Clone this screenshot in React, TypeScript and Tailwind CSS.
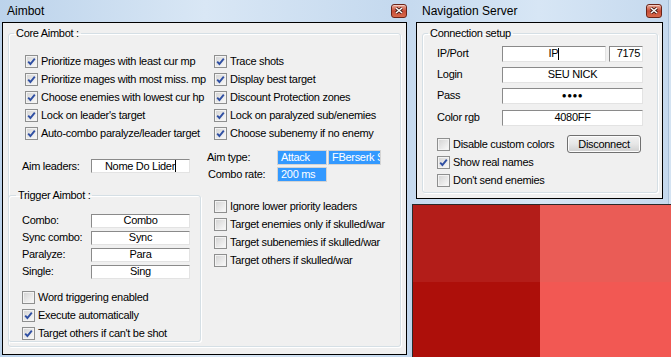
import type { ReactNode } from "react";

const ui = "font-['Liberation_Sans',Arial,sans-serif] text-[11px] tracking-[-0.3px] text-black";

function CloseBtn() {
  return (
    <span className="w-[16px] h-[14px] rounded-[3px] border border-[#6b2418] bg-linear-to-b from-[#eaa896] via-[#c64c37] to-[#d9694b] flex items-center justify-center shadow-[inset_0_1px_0_rgba(255,255,255,0.45)]">
      <svg width="8" height="7" viewBox="0 0 8 7">
        <path d="M1 1 L7 6 M7 1 L1 6" stroke="#3b1711" strokeWidth="3" />
        <path d="M1 1 L7 6 M7 1 L1 6" stroke="#ffffff" strokeWidth="1.5" />
      </svg>
    </span>
  );
}

function Check({ on, label }: { on?: boolean; label: string }) {
  return (
    <div className="flex items-center h-[18px] gap-[3px] whitespace-nowrap">
      <span className="w-[13px] h-[13px] shrink-0 border border-[#8e8f8f] bg-linear-to-br from-[#d2d2d2] to-[#fbfbfb] shadow-[inset_0_0_0_1px_#f3f3f3] flex items-center justify-center">
        {on && (
          <svg width="9" height="9" viewBox="0 0 9 9">
            <path d="M1.2 4.6 L3.4 7 L7.8 1.6" stroke="#2f4fa3" strokeWidth="1.9" fill="none" />
          </svg>
        )}
      </span>
      <span>{label}</span>
    </div>
  );
}

function Field({ children, className = "" }: { children?: ReactNode; className?: string }) {
  return (
    <div
      className={`h-[14px] bg-white border border-t-[#8a8a8a] border-l-[#8a8a8a] border-r-[#e3e3e3] border-b-[#e3e3e3] flex items-center justify-center whitespace-nowrap overflow-hidden ${className}`}
    >
      {children}
    </div>
  );
}

function Caret() {
  return <span className="inline-block w-px h-[12px] bg-black" />;
}

function Blue({ children, w }: { children: ReactNode; w: string }) {
  return (
    <div className={`${w} h-[15px] bg-[#3399ff] border border-[#d4d4d4] text-white pl-[3px] flex items-center whitespace-nowrap overflow-hidden`}>
      {children}
    </div>
  );
}

const groupBox = "border border-[#d5dfe5] rounded-[3px] shadow-[inset_1px_1px_0_#fff,1px_1px_0_#fff]";

export default function App() {
  const coreLeft = [
    "Prioritize mages with least cur mp",
    "Prioritize mages with most miss. mp",
    "Choose enemies with lowest cur hp",
    "Lock on leader's target",
    "Auto-combo paralyze/leader target",
  ];
  const coreRight = [
    "Trace shots",
    "Display best target",
    "Discount Protection zones",
    "Lock on paralyzed sub/enemies",
    "Choose subenemy if no enemy",
  ];
  const triggers = [
    ["Combo:", "Combo"],
    ["Sync combo:", "Sync"],
    ["Paralyze:", "Para"],
    ["Single:", "Sing"],
  ];
  const skull = [
    "Ignore lower priority leaders",
    "Target enemies only if skulled/war",
    "Target subenemies if skulled/war",
    "Target others if skulled/war",
  ];

  return (
    <div className={`w-[671px] h-[357px] flex overflow-hidden bg-[#c9dbee] ${ui}`}>
      {/* Aimbot window */}
      <div className="w-[410px] h-full flex flex-col bg-linear-to-r from-[#bcd3eb] via-[#d9e7f5] to-[#c3d8ee] pl-[2px] pr-[3px]">
        <div className="h-[22px] flex items-center justify-between pl-[5px] pb-[1px]">
          <span className="font-['Liberation_Sans',Arial,sans-serif] text-[12px] tracking-normal">Aimbot</span>
          <CloseBtn />
        </div>
        <div className="h-[333px] border border-black bg-[#f0f0f0] pl-[5px] pt-[3px]">
          <fieldset className={`w-[393px] pb-[4px] ${groupBox}`}>
            <legend className="ml-[5px] px-[2px] leading-[14px]">Core Aimbot :</legend>
            <div className="flex pl-[16px] pt-[12px]">
              <div className="w-[189px]">
                {coreLeft.map((t) => (
                  <Check key={t} on label={t} />
                ))}
              </div>
              <div>
                {coreRight.map((t) => (
                  <Check key={t} on label={t} />
                ))}
              </div>
            </div>

            <div className="flex mt-[7px]">
              <div className="w-[198px] flex items-center pl-[13px]">
                <span className="w-[69px]">Aim leaders:</span>
                <Field className="w-[99px]">
                  Nome Do Lider
                  <Caret />
                </Field>
              </div>
              <div className="flex flex-col">
                <div className="h-[17px] flex items-center">
                  <span className="w-[70px]">Aim type:</span>
                  <Blue w="w-[50px]">Attack</Blue>
                  <div className="w-px" />
                  <Blue w="w-[53px]">FBerserk S</Blue>
                </div>
                <div className="h-[17px] flex items-center">
                  <span className="w-[70px] pl-px">Combo rate:</span>
                  <Blue w="w-[50px]">200 ms</Blue>
                </div>
              </div>
            </div>

            <div className="flex mt-[5px]">
              <fieldset className={`-ml-px w-[193px] ${groupBox}`}>
                <legend className="ml-[7px] px-[2px] leading-[14px]">Trigger Aimbot :</legend>
                <div className="pt-[10px] pl-[13px]">
                  {triggers.map(([l, v]) => (
                    <div key={l} className="h-[17px] flex items-center">
                      <span className="w-[69px]">{l}</span>
                      <Field className="w-[99px]">{v}</Field>
                    </div>
                  ))}
                  <div className="mt-[8px] mb-[-1px]">
                    <Check label="Word triggering enabled" />
                    <Check on label="Execute automatically" />
                    <Check on label="Target others if can't be shot" />
                  </div>
                </div>
              </fieldset>
              <div className="pl-[13px] pt-[9px]">
                {skull.map((t) => (
                  <Check key={t} label={t} />
                ))}
              </div>
            </div>
          </fieldset>
        </div>
      </div>

      {/* Right side */}
      <div className="w-[261px] h-full flex flex-col">
        <div className="h-[204px] flex">
          <div className="w-[258px] h-full flex flex-col bg-linear-to-r from-[#c6daef] via-[#d7e6f5] to-[#c5d9ee] pl-[6px] pr-[5px]">
            <div className="h-[22px] flex items-center justify-between pl-[6px] pr-px pb-[1px]">
              <span className="font-['Liberation_Sans',Arial,sans-serif] text-[12px] tracking-normal">Navigation Server</span>
              <CloseBtn />
            </div>
            <div className="h-[177px] border border-black bg-[#f0f0f0] pl-[5px] pt-[3px]">
              <fieldset className={`w-[236px] pb-[3px] ${groupBox}`}>
                <legend className="ml-[5px] px-[2px] leading-[14px]">Connection setup</legend>
                <div className="pt-[3px] px-[14px]">
                  <div className="h-[21px] flex items-center">
                    <span className="w-[65px]">IP/Port</span>
                    <Field className="flex-1 h-[16px]">
                      IP
                      <Caret />
                    </Field>
                    <Field className="w-[34px] h-[16px] ml-[3px] !justify-end pr-[2px]">7175</Field>
                  </div>
                  <div className="h-[21px] flex items-center">
                    <span className="w-[65px]">Login</span>
                    <Field className="flex-1 h-[16px]">SEU NICK</Field>
                  </div>
                  <div className="h-[21px] flex items-center">
                    <span className="w-[65px]">Pass</span>
                    <Field className="flex-1 h-[16px]">
                      <span className="text-[8px] tracking-[0.5px]">●●●●</span>
                    </Field>
                  </div>
                  <div className="h-[21px] mt-[1px] flex items-center">
                    <span className="w-[65px]">Color rgb</span>
                    <Field className="flex-1 h-[16px]">4080FF</Field>
                  </div>
                  <div className="mt-[7px]">
                    <div className="flex items-center justify-between">
                      <Check label="Disable custom colors" />
                      <button className="w-[74px] h-[18px] mr-[2px] rounded-[3px] border border-[#707070] bg-linear-to-b from-[#f2f2f2] via-[#e6e6e6] to-[#cfcfcf] shadow-[inset_0_0_0_1px_#fcfcfc]">
                        Disconnect
                      </button>
                    </div>
                    <Check on label="Show real names" />
                    <Check label="Don't send enemies" />
                  </div>
                </div>
              </fieldset>
            </div>
          </div>
          <div className="flex-1 border-l border-[#a9c0d8] bg-[#d4e3f2]" />
        </div>

        <div className="flex-1 flex bg-[#bcd3ea]">
          <div className="w-[2px]" />
          <div className="flex-1 grid grid-cols-[127px_1fr] grid-rows-[77px_1fr] border-l border-t border-[#2a2a2a]">
            <div className="bg-[#b31d19]" />
            <div className="bg-[#ea5c56]" />
            <div className="bg-[#ad0f0a]" />
            <div className="bg-[#f25853]" />
          </div>
        </div>
      </div>
    </div>
  );
}
